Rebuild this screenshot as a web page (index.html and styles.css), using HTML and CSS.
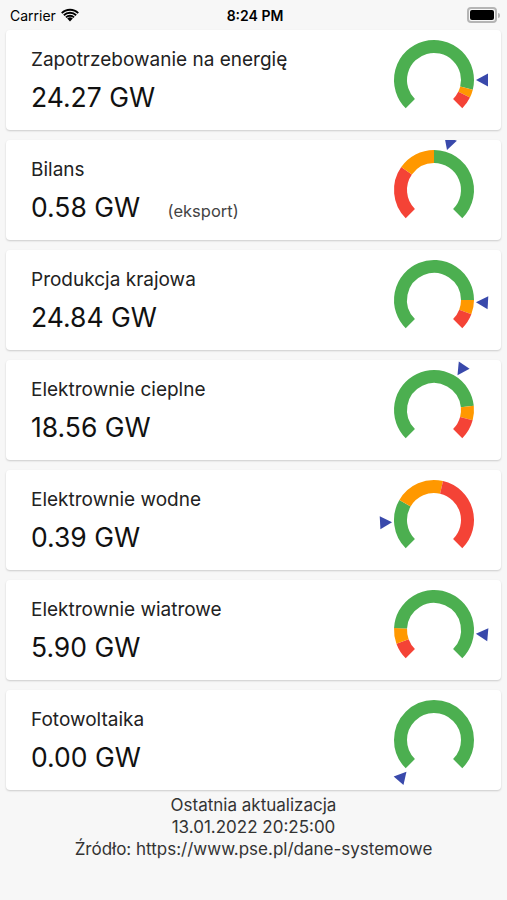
FILE: index.html
```html
<!DOCTYPE html>
<html lang="pl">

<head>
    <meta charset="UTF-8" />
    <meta name="viewport" content="width=device-width, initial-scale=1" />
    <title>Energia PSE</title>
    <link rel="stylesheet" href="styles.css">
</head>

<body>
    <div class="status-bar">
        <div class="status-left">
            Carrier
            <svg class="wifi" width="18" height="14" viewBox="0 0 18 14">
                <path d="M9 13.5 L6.2 10.6 A4 4 0 0 1 11.8 10.6 Z" fill="#000" />
                <path d="M4.3 8.7 A6.7 6.7 0 0 1 13.7 8.7 L12.4 10 A4.9 4.9 0 0 0 5.6 10 Z" fill="#000" />
                <path d="M2.2 6.6 A9.6 9.6 0 0 1 15.8 6.6 L14.5 7.9 A7.8 7.8 0 0 0 3.5 7.9 Z" fill="#000" />
                <path d="M0.1 4.5 A12.6 12.6 0 0 1 17.9 4.5 L16.6 5.8 A10.8 10.8 0 0 0 1.4 5.8 Z" fill="#000" />
            </svg>
        </div>
        <div class="status-time">8:24 PM</div>
        <div class="status-right">
            <div class="battery"><div class="battery-fill"></div></div>
            <div class="battery-nub"></div>
        </div>
    </div>

    <div class="list">
        <div class="card">
            <div class="card-text">
                <div class="card-title">Zapotrzebowanie na energię</div>
                <div class="card-value">24.27 GW</div>
            </div>
            <svg class="gauge" data-seg="g:-135:104,o:104:116,r:116:135" data-ptr="90"></svg>
        </div>

        <div class="card">
            <div class="card-text">
                <div class="card-title">Bilans</div>
                <div class="card-value">0.58 GW <span class="card-note">(eksport)</span></div>
            </div>
            <svg class="gauge" data-seg="r:-135:-55,o:-55:0,g:0:135" data-ptr="18"></svg>
        </div>

        <div class="card">
            <div class="card-text">
                <div class="card-title">Produkcja krajowa</div>
                <div class="card-value">24.84 GW</div>
            </div>
            <svg class="gauge" data-seg="g:-135:90,o:90:111,r:111:135" data-ptr="93"></svg>
        </div>

        <div class="card">
            <div class="card-text">
                <div class="card-title">Elektrownie cieplne</div>
                <div class="card-value">18.56 GW</div>
            </div>
            <svg class="gauge" data-seg="g:-135:84,o:84:105,r:105:135" data-ptr="34"></svg>
        </div>

        <div class="card">
            <div class="card-text">
                <div class="card-title">Elektrownie wodne</div>
                <div class="card-value">0.39 GW</div>
            </div>
            <svg class="gauge" data-seg="g:-135:-60,o:-60:13,r:13:135" data-ptr="-93"></svg>
        </div>

        <div class="card">
            <div class="card-text">
                <div class="card-title">Elektrownie wiatrowe</div>
                <div class="card-value">5.90 GW</div>
            </div>
            <svg class="gauge" data-seg="r:-135:-110,o:-110:-87,g:-87:135" data-ptr="95"></svg>
        </div>

        <div class="card">
            <div class="card-text">
                <div class="card-title">Fotowoltaika</div>
                <div class="card-value">0.00 GW</div>
            </div>
            <svg class="gauge" data-seg="g:-135:135" data-ptr="-139"></svg>
        </div>
    </div>

    <div class="footer">
        Ostatnia aktualizacja<br>
        13.01.2022 20:25:00<br>
        Źródło: https://www.pse.pl/dane-systemowe
    </div>

    <script>
        // kąty w stopniach od góry, zgodnie z ruchem wskazówek zegara
        const COLORS = { g: '#4caf50', o: '#ff9800', r: '#f44336' };
        const CX = 55, CY = 50, R = 33.5;

        function pt(deg, r) {
            const a = deg * Math.PI / 180;
            return [CX + r * Math.sin(a), CY - r * Math.cos(a)];
        }

        function arc(from, to) {
            const [x1, y1] = pt(from, R);
            const [x2, y2] = pt(to, R);
            const large = (to - from) > 180 ? 1 : 0;
            return `M${x1.toFixed(2)} ${y1.toFixed(2)} A${R} ${R} 0 ${large} 1 ${x2.toFixed(2)} ${y2.toFixed(2)}`;
        }

        document.querySelectorAll('.gauge').forEach(svg => {
            svg.setAttribute('viewBox', '0 0 110 100');
            let html = '';
            svg.dataset.seg.split(',').forEach(s => {
                const [c, a, b] = s.split(':');
                html += `<path d="${arc(+a, +b)}" stroke="${COLORS[c]}" stroke-width="13" fill="none" />`;
            });
            const p = +svg.dataset.ptr;
            const tip = pt(p, 42);
            const a = p * Math.PI / 180;
            const bx = CX + 54 * Math.sin(a), by = CY - 54 * Math.cos(a);
            const px = Math.cos(a) * 6.5, py = Math.sin(a) * 6.5;
            html += `<polygon points="${tip[0]},${tip[1]} ${bx + px},${by + py} ${bx - px},${by - py}" fill="#3949ab" />`;
            svg.innerHTML = html;
        });
    </script>
</body>

</html>
```

FILE: styles.css
```css
:root {
    --bg-color: #f7f7f7;
    --card-color: #fff;
    --text-color: #1c1c1c;
    --font: Inter, 'Liberation Sans', sans-serif;
}

body {
    margin: 0;
    padding: 0;
    background-color: var(--bg-color);
    font-family: var(--font);
    color: var(--text-color);
}

/* pasek statusu */
.status-bar {
    height: 30px;
    display: flex;
    align-items: center;
    justify-content: space-between;
    padding: 0 7px 0 10px;
    font-size: 14px;
    color: #000;
}

.status-left {
    flex: 1;
    display: flex;
    align-items: center;
    gap: 5px;
}

.status-time {
    font-weight: 600;
}

.status-right {
    flex: 1;
    display: flex;
    justify-content: flex-end;
    align-items: center;
}

.battery {
    width: 24px;
    height: 10px;
    border: 2px solid #b5b5b5;
    border-radius: 4px;
    padding: 1px;
    box-sizing: content-box;
}

.battery-fill {
    width: 100%;
    height: 100%;
    background: #000;
    border-radius: 2px;
}

.battery-nub {
    width: 2px;
    height: 5px;
    margin-left: 1px;
    background: #b5b5b5;
    border-radius: 0 2px 2px 0;
}

/* karty */
.list {
    display: flex;
    flex-direction: column;
    gap: 10px;
    padding: 0 6px;
}

.card {
    height: 100px;
    display: flex;
    align-items: center;
    justify-content: space-between;
    background-color: var(--card-color);
    border-radius: 4px;
    box-shadow: 0 1px 2px rgba(0, 0, 0, 0.18);
    padding: 0 12px 0 25px;
}

.card-title {
    font-size: 19px;
    color: #222;
}

.card-value {
    font-size: 26.5px;
    margin-top: 10px;
    color: #111;
}

.card-note {
    font-size: 16.5px;
    color: #444;
    margin-left: 20px;
}

.gauge {
    width: 110px;
    height: 100px;
}

.footer {
    text-align: center;
    font-size: 17px;
    line-height: 22px;
    color: #333;
    margin-top: 4px;
}
```
